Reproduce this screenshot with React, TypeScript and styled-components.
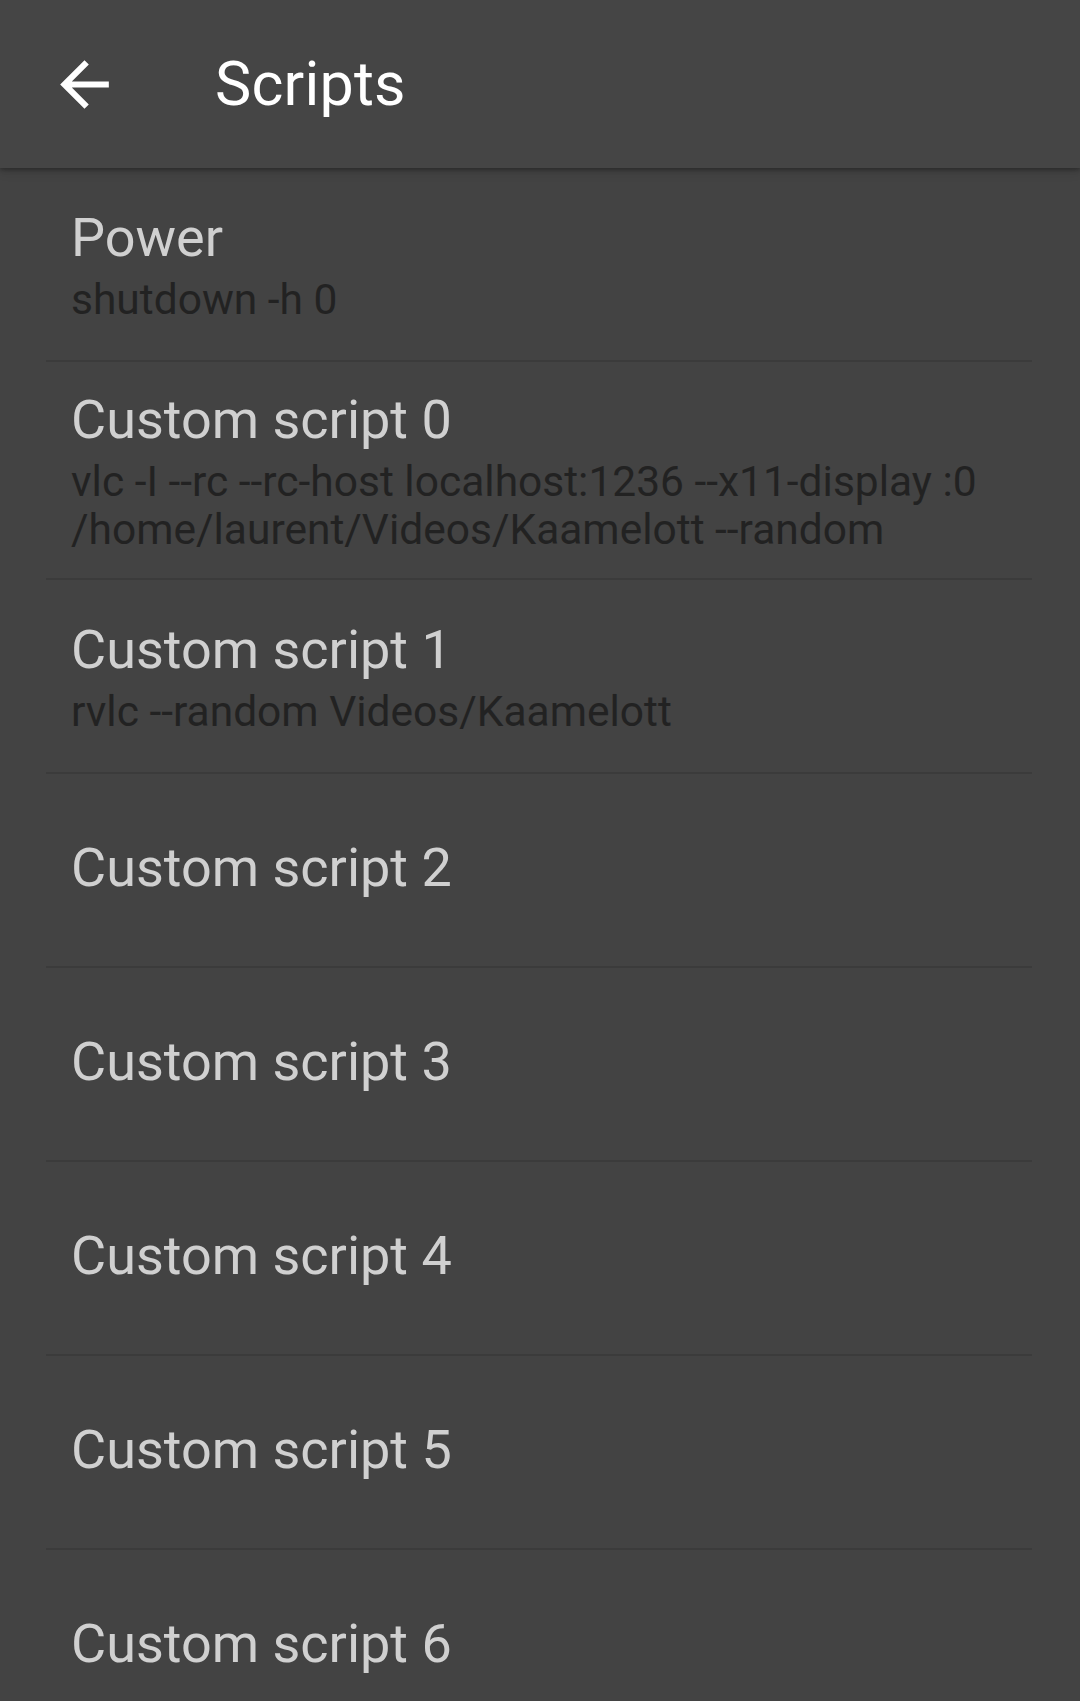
import React from "react";
import styled, { createGlobalStyle } from "styled-components";

const Global = createGlobalStyle`
  html, body {
    margin: 0;
    padding: 0;
    background: #434343;
    overflow: hidden;
  }
  body {
    font-family: Roboto, "Noto Sans", "Liberation Sans", sans-serif;
  }
`;

const Screen = styled.div`
  width: 1080px;
  height: 1701px;
  background: #434343;
  display: flex;
  flex-direction: column;
  overflow: hidden;
`;

const Toolbar = styled.header`
  position: relative;
  z-index: 2;
  height: 168px;
  flex: 0 0 168px;
  background: #454545;
  display: flex;
  align-items: center;
  box-shadow: 0 2px 4px rgba(0, 0, 0, 0.28), 0 4px 10px rgba(0, 0, 0, 0.12);
`;

const NavButton = styled.button`
  width: 168px;
  height: 168px;
  flex: 0 0 168px;
  border: none;
  background: transparent;
  padding: 0;
  display: flex;
  align-items: center;
  justify-content: center;
  color: #ffffff;
`;

const Title = styled.h1`
  margin: 0 0 0 47px;
  font-size: 61px;
  font-weight: 400;
  color: #ffffff;
  letter-spacing: 0.2px;
`;

const List = styled.ul`
  list-style: none;
  margin: 0 48px 0 46px;
  padding: 0;
`;

const Row = styled.li`
  min-height: 194px;
  box-sizing: border-box;
  padding: 19px 0 24px 25px;
  border-bottom: 2px solid #3b3b3b;
  display: flex;
  flex-direction: column;
  justify-content: center;
`;

const RowTitle = styled.div`
  font-size: 54px;
  line-height: 77px;
  color: #d0d0d0;
  white-space: nowrap;
`;

const RowSummary = styled.div`
  font-size: 42.5px;
  line-height: 48px;
  color: #222222;
  padding-right: 20px;
`;

const BackArrow = () => (
  <svg width="73" height="73" viewBox="0 0 24 24" fill="currentColor">
    <path d="M20 11H7.83l5.59-5.59L12 4l-8 8 8 8 1.41-1.41L7.83 13H20v-2z" />
  </svg>
);

type Item = { title: string; summary?: string[] };

const items: Item[] = [
  { title: "Power", summary: ["shutdown -h 0"] },
  {
    title: "Custom script 0",
    summary: [
      "vlc -I --rc --rc-host localhost:1236 --x11-display :0",
      "/home/laurent/Videos/Kaamelott --random",
    ],
  },
  { title: "Custom script 1", summary: ["rvlc --random Videos/Kaamelott"] },
  { title: "Custom script 2" },
  { title: "Custom script 3" },
  { title: "Custom script 4" },
  { title: "Custom script 5" },
  { title: "Custom script 6" },
];

export default function App() {
  return (
    <Screen>
      <Global />
      <Toolbar>
        <NavButton aria-label="Back">
          <BackArrow />
        </NavButton>
        <Title>Scripts</Title>
      </Toolbar>
      <List>
        {items.map((it) => (
          <Row key={it.title}>
            <RowTitle>{it.title}</RowTitle>
            {it.summary && (
              <RowSummary>
                {it.summary.map((line, i) => (
                  <div key={i}>{line}</div>
                ))}
              </RowSummary>
            )}
          </Row>
        ))}
      </List>
    </Screen>
  );
}
